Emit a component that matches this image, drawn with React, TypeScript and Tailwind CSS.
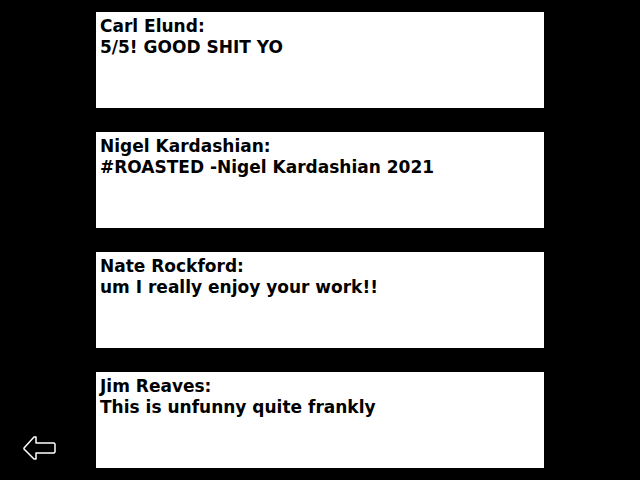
import React from "react";

type Comment = {
  author: string;
  text: string;
};

const comments: Comment[] = [
  { author: "Carl Elund:", text: "5/5! GOOD SHIT YO" },
  { author: "Nigel Kardashian:", text: "#ROASTED -Nigel Kardashian 2021" },
  { author: "Nate Rockford:", text: "um I really enjoy your work!!" },
  { author: "Jim Reaves:", text: "This is unfunny quite frankly" },
];

function BackArrow() {
  return (
    <svg width="40" height="32" viewBox="0 0 40 32" fill="none">
      <polygon
        points="2,13 12,2 14,2 14,8 32,8 33,9 33,17 32,18 14,18 14,24 12,24 2,14"
        stroke="#ffffff"
        strokeWidth={1.5}
        strokeLinejoin="round"
      />
    </svg>
  );
}

export default function App() {
  return (
    <div
      className="relative w-[640px] h-[480px] bg-black overflow-hidden"
      style={{ fontFamily: '"DejaVu Sans", sans-serif' }}
    >
      <div className="flex flex-col gap-[24px] pt-[12px] pl-[96px]">
        {comments.map((c) => (
          <div
            key={c.author}
            className="w-[448px] h-[96px] bg-white px-[4px] pt-[4px] text-black font-bold text-[17px] leading-[21px]"
          >
            <div>{c.author}</div>
            <div>{c.text}</div>
          </div>
        ))}
      </div>
      <button className="absolute left-[22px] top-[435px] cursor-pointer">
        <BackArrow />
      </button>
    </div>
  );
}
